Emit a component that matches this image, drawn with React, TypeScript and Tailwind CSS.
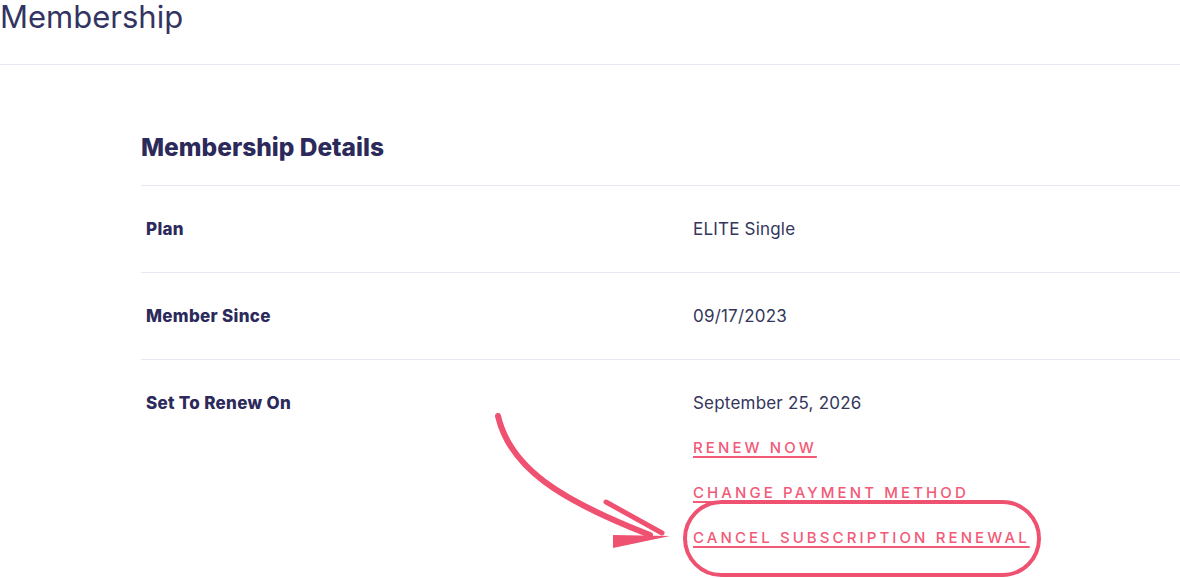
import React from "react";

interface Row {
  label: string;
  value: string;
  links?: string[];
}

const rows: Row[] = [
  { label: "Plan", value: "ELITE Single" },
  { label: "Member Since", value: "09/17/2023" },
  {
    label: "Set To Renew On",
    value: "September 25, 2026",
    links: ["Renew Now", "Change Payment Method", "Cancel Subscription Renewal"],
  },
];

// hand drawn arrow + circle round the cancel link
const Annotation: React.FC = () => (
  <svg className="absolute left-0 top-0 pointer-events-none" width="1180" height="578" viewBox="0 0 1180 578">
    <g stroke="#ee5270" fill="none" strokeLinecap="round" strokeLinejoin="round">
      <path d="M498 416 C 510 468, 560 500, 650 535" strokeWidth="6" />
      <path d="M606 502 L 662 533" strokeWidth="5" />
      <rect x="685" y="502" width="354" height="73" rx="36.5" strokeWidth="4" />
    </g>
    <path d="M613 535 L 670 536 L 613 548 Z" fill="#ee5270" />
  </svg>
);

const App: React.FC = () => {
  return (
    <div className="relative w-[1180px] h-[578px] overflow-hidden bg-white font-['Inter',sans-serif] text-[#2b2a5a]">
      <div className="h-[65px] border-b border-[#e6e9f1]">
        <h1 className="text-[31px] leading-[34px] font-normal text-[#343463]">Membership</h1>
      </div>

      <div className="pl-[141px] pt-[66px]">
        <h2 className="text-[24.5px] leading-[32px] font-extrabold pb-[22px] border-b border-[#e6e9f1]">
          Membership Details
        </h2>

        {rows.map((row) =>
          row.links ? (
            <div key={row.label} className="flex pt-[31px]">
              <div className="w-[552px] pl-[5px] text-[17px] leading-6 font-extrabold tracking-[0.3px]">{row.label}</div>
              <div className="flex flex-col gap-[21px]">
                <div className="text-[17px] leading-6 tracking-[0.2px] text-[#34365c]">{row.value}</div>
                {row.links.map((l) => (
                  <a
                    key={l}
                    href="#"
                    className="text-[15px] leading-6 font-medium uppercase tracking-[3.1px] text-[#f25a78] underline underline-offset-[3px] decoration-[1.5px]"
                  >
                    {l}
                  </a>
                ))}
              </div>
            </div>
          ) : (
            <div key={row.label} className="flex items-center h-[87px] border-b border-[#e6e9f1]">
              <div className="w-[552px] pl-[5px] text-[17px] leading-6 font-extrabold tracking-[0.3px]">{row.label}</div>
              <div className="text-[17px] leading-6 tracking-[0.2px] text-[#34365c]">{row.value}</div>
            </div>
          )
        )}
      </div>

      <Annotation />
    </div>
  );
};

export default App;
